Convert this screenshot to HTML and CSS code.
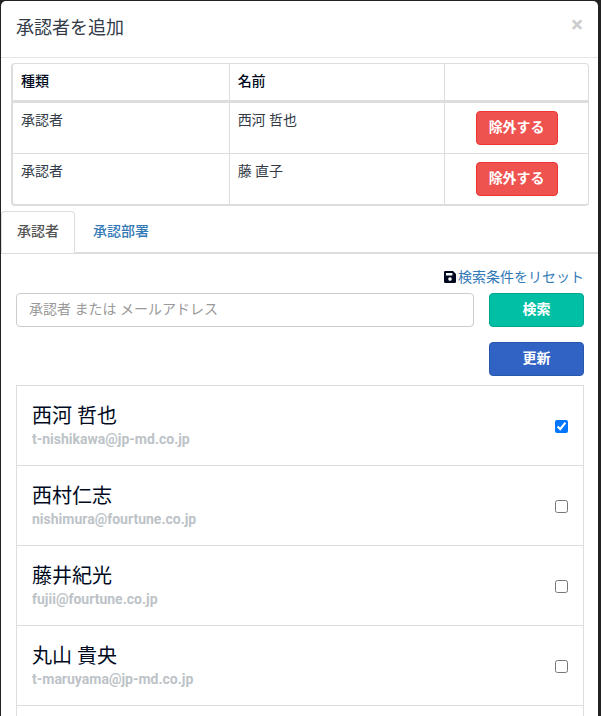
FILE: index.html
```html
<!DOCTYPE html>
<html lang="ja">
<head>
<meta charset="utf-8">
<meta name="viewport" content="width=device-width, initial-scale=1">
<title>承認者を追加</title>
<link rel="stylesheet" href="styles.css">
</head>
<body>
<div class="modal" role="dialog" aria-labelledby="modal-title">
  <header class="modal-header">
    <h1 class="modal-title" id="modal-title">承認者を追加</h1>
    <button class="close" type="button" aria-label="閉じる">×</button>
  </header>

  <table class="selected">
    <colgroup><col class="col-kind"><col class="col-name"><col></colgroup>
    <thead>
      <tr><th>種類</th><th>名前</th><th></th></tr>
    </thead>
    <tbody>
      <tr>
        <td>承認者</td><td>西河 哲也</td>
        <td class="action"><button class="btn btn-danger" type="button">除外する</button></td>
      </tr>
      <tr>
        <td>承認者</td><td>藤 直子</td>
        <td class="action"><button class="btn btn-danger" type="button">除外する</button></td>
      </tr>
    </tbody>
  </table>

  <nav class="tabs">
    <a class="tab active" href="#approver">承認者</a>
    <a class="tab" href="#department">承認部署</a>
  </nav>

  <section class="pane" id="approver">
    <div class="reset">
      <svg class="icon" viewBox="0 0 12 12" aria-hidden="true">
        <path fill-rule="evenodd" d="M1.2 0H9L12 3V10.8Q12 12 10.8 12H1.2Q0 12 0 10.8V1.2Q0 0 1.2 0ZM2 2V4.6H8.4V2ZM6 6.3A1.8 1.8 0 1 0 6 9.9A1.8 1.8 0 1 0 6 6.3Z"/>
      </svg>
      <a class="reset-link" href="#reset">検索条件をリセット</a>
    </div>
    <form class="search">
      <input class="query" type="text" aria-label="承認者 または メールアドレス" placeholder="承認者 または メールアドレス">
      <button class="btn btn-success" type="button">検索</button>
      <button class="btn btn-primary" type="button">更新</button>
    </form>
    <ul class="people">
      <li><label class="person"><span class="who"><span class="name">西河 哲也</span><span class="mail">t-nishikawa@jp-md.co.jp</span></span><input class="check" type="checkbox" checked></label></li>
      <li><label class="person"><span class="who"><span class="name">西村仁志</span><span class="mail">nishimura@fourtune.co.jp</span></span><input class="check" type="checkbox"></label></li>
      <li><label class="person"><span class="who"><span class="name">藤井紀光</span><span class="mail">fujii@fourtune.co.jp</span></span><input class="check" type="checkbox"></label></li>
      <li><label class="person"><span class="who"><span class="name">丸山 貴央</span><span class="mail">t-maruyama@jp-md.co.jp</span></span><input class="check" type="checkbox"></label></li>
      <li class="more"></li>
    </ul>
  </section>
</div>
</body>
</html>
```
FILE: styles.css
```css
* { box-sizing: border-box; }

html { background: #222; }

body {
  margin: 0;
  padding: 1px 3px 0 1px;
  min-height: 100vh;
  color: #333b48;
  font: 14px/20px Roboto, "Noto Sans CJK JP", sans-serif;
}

button, input { font: inherit; }

.modal {
  background: #fff;
  border-radius: 5px 5px 0 0;
}

.modal-header {
  display: flex;
  align-items: center;
  justify-content: space-between;
  height: 57px;
  padding: 0 15px 2px;
  border-bottom: 1px solid #e5e5e5;
}

.modal-title {
  margin: 0;
  font-size: 18px;
  line-height: 26px;
  font-weight: 400;
}

.close {
  padding: 0 0 6px;
  border: 0;
  background: none;
  color: #ccc;
  font-size: 22px;
  line-height: 22px;
  font-weight: 700;
}

.selected {
  width: calc(100% - 19px);
  margin: 5px 9px 5px 10px;
  table-layout: fixed;
  border: 1px solid #ddd;
  border-width: 1px 1px 2px 2px;
  border-radius: 4px;
  border-spacing: 0;
}

.col-kind, .col-name { width: 37.5%; }

.selected th, .selected td {
  padding: 7px 8px 9px;
  text-align: left;
  vertical-align: top;
}

.selected th {
  height: 39px;
  border-bottom: 3px solid #ddd;
  color: #000a1e;
  font-weight: 500;
}

.selected th + th, .selected td + td { border-left: 1px solid #ddd; }
.selected tr + tr td { border-top: 1px solid #ddd; }
.selected .action { padding: 8px; }

.btn {
  height: 34px;
  padding: 0 12px 2px;
  border: 1px solid;
  border-radius: 4px;
  color: #fff;
  font-weight: 700;
}

.selected .btn { display: block; margin: 0 auto; }

.btn-danger { background: #ef5350; border-color: #f03434; }
.btn-success { background: #00bfa5; border-color: #00a68f; }
.btn-primary { background: #3163c5; border-color: #2a57ae; }

.tabs {
  display: flex;
  gap: 2px;
  border-bottom: 2px solid #ddd;
}

.tab {
  height: 41px;
  padding: 9px 15px;
  border: 1px solid transparent;
  border-bottom: 0;
  border-radius: 4px 4px 0 0;
  color: #337ab7;
  font-weight: 500;
  text-decoration: none;
}

.tab.active {
  margin-bottom: -1px;
  height: 42px;
  background: #fff;
  border-color: #ddd;
  color: #555;
}

.pane { padding: 13px 14px 0 15px; }

.reset {
  display: flex;
  align-items: center;
  justify-content: flex-end;
  gap: 2px;
  height: 26px;
  padding-bottom: 6px;
}

.icon { width: 12px; height: 12px; fill: #000a1e; }

.reset-link { color: #337ab7; text-decoration: none; }

.search {
  display: grid;
  grid-template-columns: 1fr 95px;
  gap: 15px;
}

.query {
  min-width: 0;
  height: 34px;
  padding: 0 12px 2px;
  border: 1px solid #ccc;
  border-radius: 4px;
}

.query::placeholder { color: #999; opacity: 1; }

.btn-primary { grid-column: 2; }

.people {
  margin: 9px 0 0;
  padding: 0;
  list-style: none;
  border: 1px solid #ddd;
  border-bottom: 0;
}

.people li + li { border-top: 1px solid #ddd; }

.person {
  display: flex;
  align-items: center;
  justify-content: space-between;
  padding: 17px 15px 16px;
}

.who { display: grid; }

.name {
  color: #000a1e;
  font-size: 20px;
  line-height: 26px;
}

.mail {
  color: #bdc3c7;
  font-weight: 700;
}

.check { width: 13px; height: 13px; margin: 0; }

.people .more { height: 11px; }
```
